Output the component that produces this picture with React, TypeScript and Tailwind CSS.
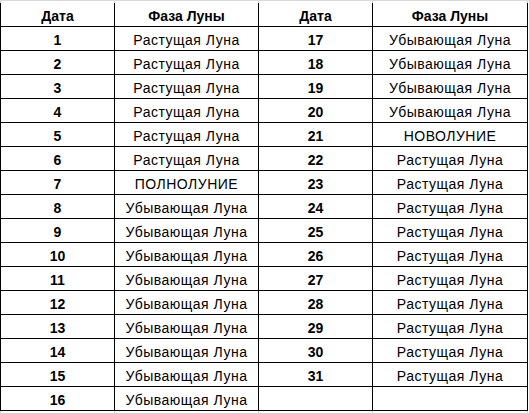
const left: [number, string][] = [
  [1, 'Растущая Луна'],
  [2, 'Растущая Луна'],
  [3, 'Растущая Луна'],
  [4, 'Растущая Луна'],
  [5, 'Растущая Луна'],
  [6, 'Растущая Луна'],
  [7, 'ПОЛНОЛУНИЕ'],
  [8, 'Убывающая Луна'],
  [9, 'Убывающая Луна'],
  [10, 'Убывающая Луна'],
  [11, 'Убывающая Луна'],
  [12, 'Убывающая Луна'],
  [13, 'Убывающая Луна'],
  [14, 'Убывающая Луна'],
  [15, 'Убывающая Луна'],
  [16, 'Убывающая Луна'],
];

const right: [number, string][] = [
  [17, 'Убывающая Луна'],
  [18, 'Убывающая Луна'],
  [19, 'Убывающая Луна'],
  [20, 'Убывающая Луна'],
  [21, 'НОВОЛУНИЕ'],
  [22, 'Растущая Луна'],
  [23, 'Растущая Луна'],
  [24, 'Растущая Луна'],
  [25, 'Растущая Луна'],
  [26, 'Растущая Луна'],
  [27, 'Растущая Луна'],
  [28, 'Растущая Луна'],
  [29, 'Растущая Луна'],
  [30, 'Растущая Луна'],
  [31, 'Растущая Луна'],
];

const cols = 'grid grid-cols-[114px_144px_114px_155px]';
const cell = 'h-6 flex items-center justify-center pt-[2px] border-r border-b border-black leading-4';
const head = `${cell} font-bold text-[14px]`;
const date = `${cell} font-bold text-[14px]`;
const phase = `${cell} text-[14px] tracking-[0.5px]`;

// gridline strip above / below the bordered block
const GridStrip = ({ h, top }: { h: string; top?: boolean }) => (
  <div className={`${cols} ${h} border-l border-[#d9d9d9] ${top ? 'border-t' : ''}`}>
    <div className="border-r border-[#d9d9d9]" />
    <div className="border-r border-[#d9d9d9]" />
    <div className="border-r border-[#d9d9d9]" />
    <div className="border-r border-[#d9d9d9]" />
  </div>
);

export default function App() {
  return (
    <div
      className="w-[529px] h-[413px] bg-white text-black overflow-hidden"
      style={{ fontFamily: '"Liberation Sans", Arial, sans-serif' }}
    >
      <GridStrip h="h-[3px]" top />

      <div className={`${cols} border-l border-black`}>
        {/* Header */}
        <div className={head}>Дата</div>
        <div className={head}>Фаза Луны</div>
        <div className={head}>Дата</div>
        <div className={head}>Фаза Луны</div>

        {left.map(([d, p], i) => {
          const r = right[i];
          return [
            <div key={`a${d}`} className={date}>{d}</div>,
            <div key={`b${d}`} className={phase}>{p}</div>,
            <div key={`c${d}`} className={date}>{r ? r[0] : ''}</div>,
            <div key={`d${d}`} className={phase}>{r ? r[1] : ''}</div>,
          ];
        })}
      </div>

      <GridStrip h="h-[2px]" />
    </div>
  );
}
